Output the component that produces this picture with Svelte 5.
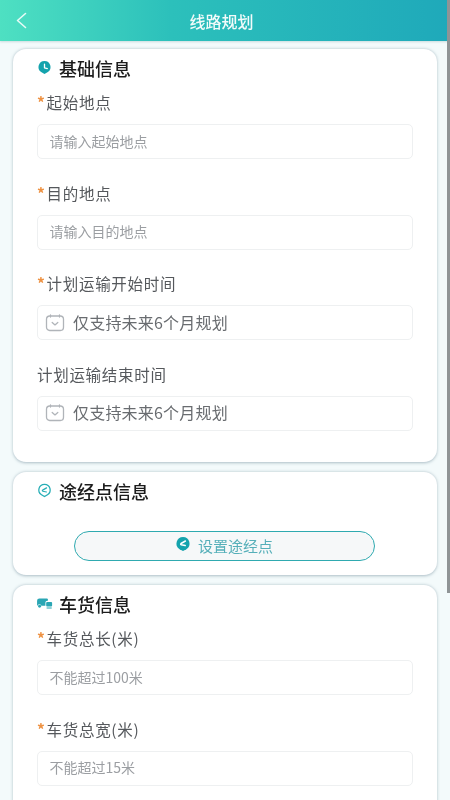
<script>
  const basic = [
    { label: '起始地点', req: true, ph: '请输入起始地点' },
    { label: '目的地点', req: true, ph: '请输入目的地点' },
    { label: '计划运输开始时间', req: true, date: true, ph: '仅支持未来6个月规划' },
    { label: '计划运输结束时间', req: false, date: true, ph: '仅支持未来6个月规划' }
  ];
  const cargo = [
    { label: '车货总长(米)', req: true, ph: '不能超过100米' },
    { label: '车货总宽(米)', req: true, ph: '不能超过15米' }
  ];
</script>

{#snippet field(f)}
  <div class="field">
    <div class="label">{#if f.req}<span class="star">*</span>{/if}{f.label}</div>
    <div class="input" class:date={f.date}>
      {#if f.date}
        <svg class="cal" viewBox="0 0 20 20" width="20" height="20" fill="none" stroke="#b0b4b9" stroke-width="1.3">
          <rect x="1.5" y="3" width="17" height="14.5" rx="3.2" />
          <path d="M5.5 2v2M14.5 2v2" stroke-linecap="round" />
          <path d="M7.2 9.5l2.8 2.4 2.8-2.4" stroke-linecap="round" stroke-linejoin="round" />
        </svg>
      {/if}
      <span class="txt">{f.ph}</span>
    </div>
  </div>
{/snippet}

<div class="page">
  <header class="top">
    <svg class="back" viewBox="0 0 12 18" width="12" height="18" fill="none" stroke="#e6fbf6" stroke-width="1.6">
      <path d="M10.5 2.5L2.5 9.5l8 7" stroke-linecap="round" stroke-linejoin="round" />
    </svg>
    <h1>线路规划</h1>
  </header>

  <main class="content">
    <section class="card first">
      <div class="head">
        <svg viewBox="0 0 16 16" width="15" height="15">
          <path d="M8 1.2a6.4 6.4 0 0 1 3.6 11.7L8 14.8l-3.6-1.9A6.4 6.4 0 0 1 8 1.2z" fill="#14a3ad" />
          <path d="M8 4.4v3.9l3 .9" fill="none" stroke="#fff" stroke-width="1.4" stroke-linecap="round" stroke-linejoin="round" />
        </svg>
        <h2>基础信息</h2>
      </div>
      {#each basic as f}
        {@render field(f)}
      {/each}
    </section>

    <section class="card second">
      <div class="head">
        <svg viewBox="0 0 16 16" width="15" height="15" fill="none">
          <path d="M8 1.4a6 6 0 0 1 3.2 11.1L8 14.4l-3.2-1.9A6 6 0 0 1 8 1.4z" stroke="#27aeb6" stroke-width="1.4" />
          <path d="M10.2 5.2L6 7.6c-.5.4-.4 1 .2 1.2l3.9.8" stroke="#27aeb6" stroke-width="1.3" stroke-linecap="round" stroke-linejoin="round" />
        </svg>
        <h2>途经点信息</h2>
      </div>
      <div class="btn-row">
        <div class="btn">
          <svg viewBox="0 0 16 16" width="16" height="16">
            <path d="M8 1a6.6 6.6 0 0 1 3.4 12.2L8 15l-3.4-1.8A6.6 6.6 0 0 1 8 1z" fill="#14a3ad" />
            <path d="M10.4 5L6 7.5c-.5.4-.4 1 .2 1.2l4 .8" fill="none" stroke="#fff" stroke-width="1.5" stroke-linecap="round" stroke-linejoin="round" />
          </svg>
          <span class="txt">设置途经点</span>
        </div>
      </div>
    </section>

    <section class="card third">
      <div class="head">
        <svg class="truck" viewBox="0 0 18 14" width="17" height="13">
          <path d="M3.5 1.5h8a1.2 1.2 0 0 1 1.2 1.2V4h-.7a2 2 0 0 0-2 2v3.5H5.6a2 2 0 0 0-3.9-.3H1V4a2.5 2.5 0 0 1 2.5-2.5z" fill="#2aa6b4" />
          <rect x="10.8" y="5.5" width="6.4" height="4.6" rx="1" fill="#2aa6b4" />
          <circle cx="3.7" cy="10" r="1.6" fill="#2aa6b4" />
          <rect x="11" y="11" width="6" height="1.6" rx=".8" fill="#6cc4cc" />
        </svg>
        <h2>车货信息</h2>
      </div>
      {#each cargo as f}
        {@render field(f)}
      {/each}
    </section>
  </main>

  <div class="scrollbar"></div>
</div>

<style>
  :global(html), :global(body) {
    margin: 0;
    height: 800px;
    overflow: hidden;
    background: #f3fafb;
  }
  .page {
    position: relative;
    width: 450px;
    height: 800px;
    overflow: hidden;
    font-family: "Noto Sans CJK SC", "Noto Sans", sans-serif;
    filter: blur(0.35px);
  }
  .top {
    height: 41px;
    box-sizing: border-box;
    padding-right: 7px;
    display: flex;
    align-items: center;
    justify-content: center;
    position: relative;
    background: linear-gradient(90deg, #4ee0c2 0%, #2cc0bb 38%, #1fa9ba 100%);
    box-shadow: 0 1px 2px rgba(80, 130, 140, 0.25);
  }
  .back {
    position: absolute;
    left: 15px;
    top: 11px;
  }
  h1 {
    margin: 0;
    font-size: 16px;
    font-weight: 500;
    color: #f2fbfa;
    line-height: 40px;
  }
  .content {
    display: flex;
    flex-direction: column;
    gap: 10px;
    padding: 8px 13px 0;
  }
  .card {
    background: #fff;
    border-radius: 13px;
    box-sizing: border-box;
    width: 424px;
    padding: 6px 24px 0;
    box-shadow: 0 0.5px 3px rgba(100, 130, 145, 0.5);
  }
  .first { height: 413px; }
  .second { height: 103px; }
  .third { height: 260px; }
  .head {
    display: flex;
    align-items: center;
    height: 26px;
    gap: 7px;
  }
  .head svg { margin-bottom: 2px; flex: none; }
  .head .truck { margin-left: -1px; margin-right: -1px; }
  h2 {
    margin: 0;
    font-size: 18px;
    font-weight: 500;
    color: #1c1c1c;
    line-height: 26px;
  }
  .field { margin-bottom: 22.5px; }
  .label {
    font-size: 15.5px;
    letter-spacing: 0.7px;
    line-height: 22px;
    color: #55585c;
    margin-top: 10px;
    height: 22px;
  }
  .star { color: #ee9243; font-weight: 700; margin-right: 1px; }
  .input {
    margin-top: 11px;
    height: 35px;
    box-sizing: border-box;
    border: 1.5px solid #eef0f1;
    border-radius: 5px;
    padding: 0 11.5px;
    display: flex;
    align-items: center;
    font-size: 14px;
    color: #9b9ea2;
  }
  .input.date {
    padding: 0 7px;
    gap: 8px;
    font-size: 16px;
    letter-spacing: 0.2px;
    color: #696c70;
  }
  .txt { position: relative; top: -1px; }
  .cal { flex: none; }
  .btn-row {
    display: flex;
    justify-content: center;
    margin-top: 27px;
    margin-left: -2px;
  }
  .btn {
    width: 301px;
    height: 30px;
    box-sizing: border-box;
    border: 1.5px solid #2faab0;
    border-radius: 15px;
    background: #f6f8f9;
    display: flex;
    align-items: center;
    justify-content: center;
    gap: 7px;
    font-size: 15px;
    color: #55afb9;
  }
  .btn svg { margin-bottom: 4px; }
  .scrollbar {
    position: absolute;
    right: 0;
    top: 0;
    width: 3px;
    height: 593px;
    background: #8f9496;
  }
</style>
